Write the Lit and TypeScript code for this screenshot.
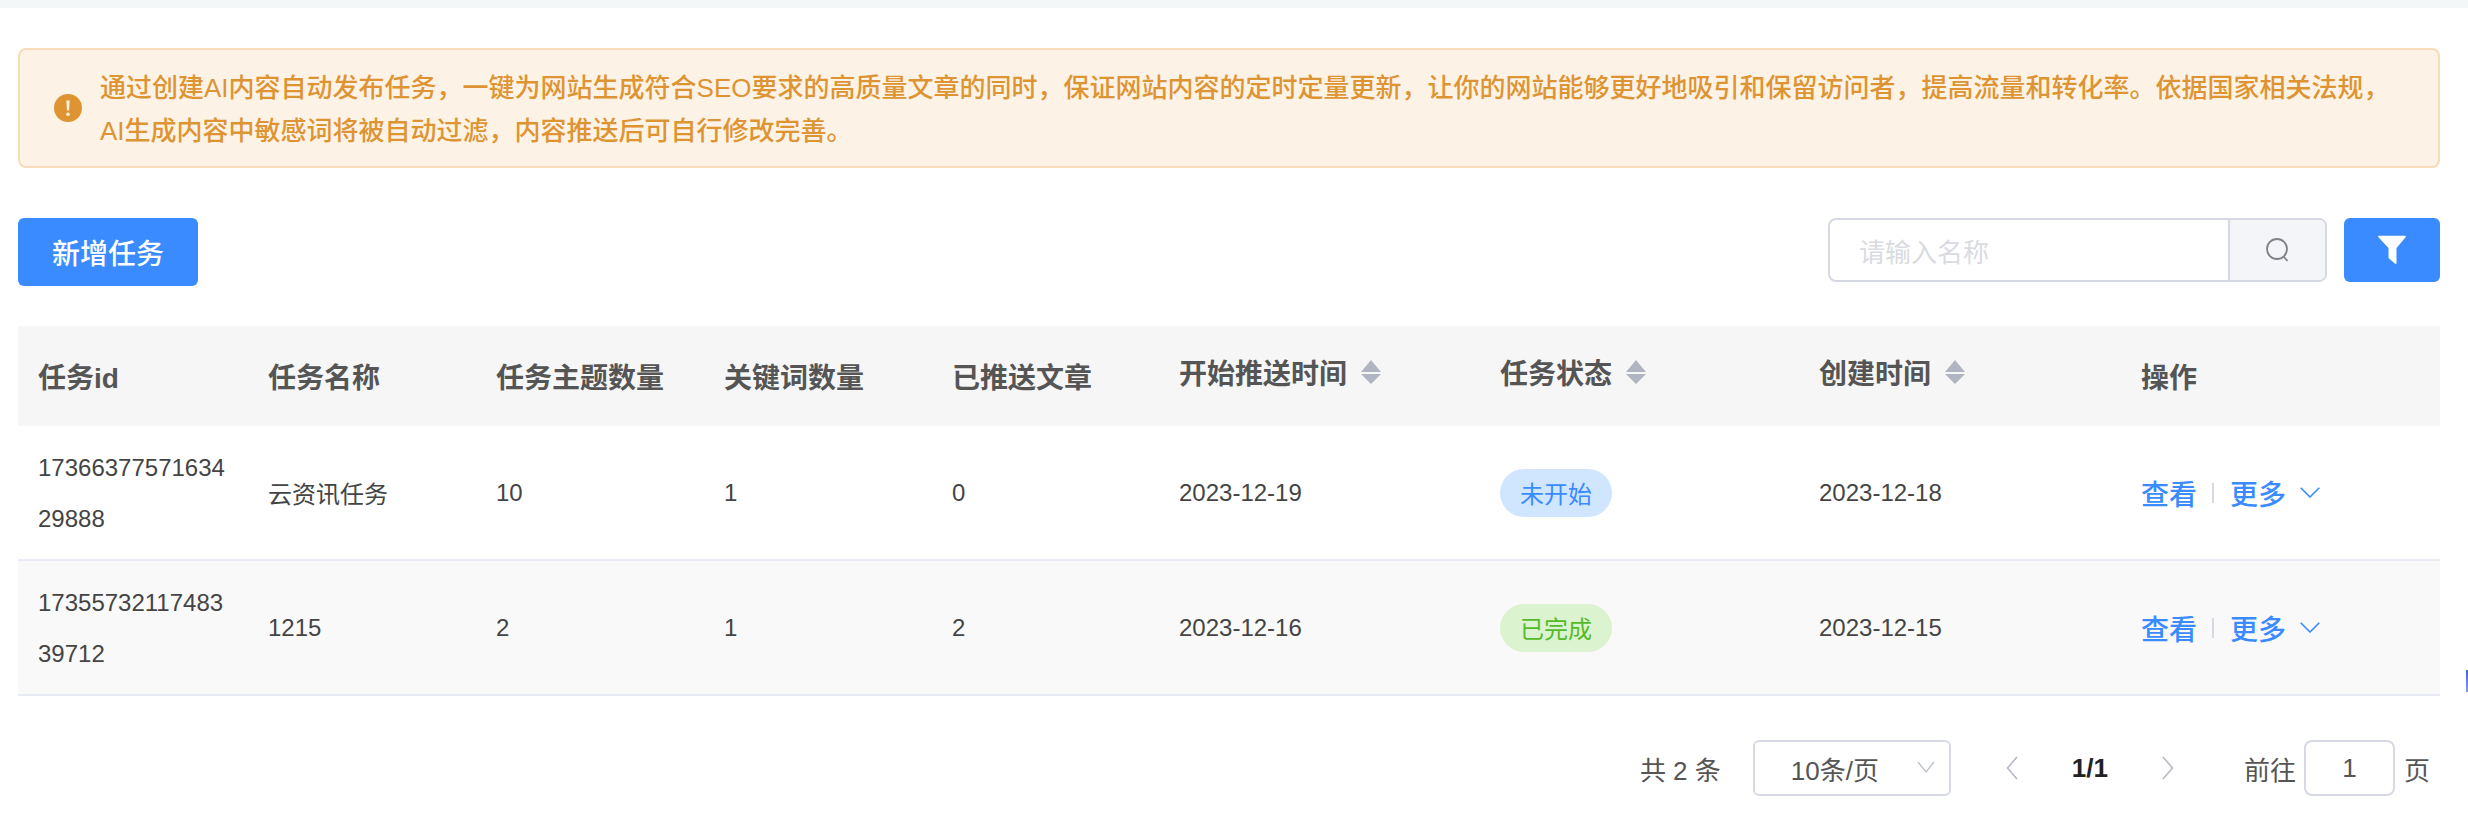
import { LitElement, html, css } from "lit";
import { customElement } from "lit/decorators.js";

const caret = html`<svg class="caret" viewBox="0 0 20 24" width="20" height="24"><path d="M10 0 L20 12 H0 Z M0 14 H20 L10 24 Z"/></svg>`;
const chevDown = html`<svg class="chev" viewBox="0 0 20 11" width="20" height="11"><path d="M0.7 0.7 L10 10 L19.3 0.7"/></svg>`;

const rows = [
  { id: "1736637757163429888", name: "云资讯任务", topics: "10", kw: "1", pushed: "0", start: "2023-12-19", status: "未开始", cls: "blue", created: "2023-12-18" },
  { id: "1735573211748339712", name: "1215", topics: "2", kw: "1", pushed: "2", start: "2023-12-16", status: "已完成", cls: "green", created: "2023-12-15" },
];

@customElement("app-root")
export class AppRoot extends LitElement {
  static styles = css`
    :host {
      display: block;
      background: #fff;
      color: #444;
      font-family: "Liberation Sans", "Noto Sans CJK SC", sans-serif;
      font-size: 24px;
      height: 834px;
      overflow: hidden;
      position: relative;
    }
    .strip { height: 8px; background: #f4f7f8; }
    .sliver {
      position: absolute;
      right: 0;
      top: 670px;
      width: 2px;
      height: 22px;
      background: linear-gradient(#3f66e0, #7f9cf0);
    }
    .page { padding: 40px 28px 0 18px; }
    .alert {
      display: flex;
      align-items: center;
      height: 120px;
      box-sizing: border-box;
      border: 2px solid #f6dcb9;
      border-radius: 8px;
      background: #fcf3e6;
      color: #de9432;
      font-size: 26px;
      font-weight: 500;
      line-height: 43px;
      padding: 0 40px 0 34px;
      gap: 18px;
    }
    .alert svg { flex: none; }
    .alert .msg { flex: 1; padding-top: 3px; }
    .toolbar {
      display: flex;
      align-items: flex-start;
      margin-top: 50px;
      height: 108px;
    }
    .add {
      width: 180px;
      height: 68px;
      display: flex;
      align-items: center;
      justify-content: center;
      background: #3a8bff;
      color: #fff;
      border-radius: 6px;
      font-size: 28px;
      font-weight: 500;
    }
    .spacer { flex: 1; }
    .search {
      width: 499px;
      height: 64px;
      box-sizing: border-box;
      border: 2px solid #d6d9e4;
      border-radius: 8px;
      display: flex;
      overflow: hidden;
    }
    .ph {
      flex: 1;
      display: flex;
      align-items: center;
      padding-left: 29px;
      font-size: 26px;
      color: #d9dbe0;
    }
    .sbtn {
      width: 97px;
      box-sizing: border-box;
      border-left: 2px solid #d6d9e4;
      background: #f4f5f9;
      display: flex;
      align-items: center;
      justify-content: center;
    }
    .filter {
      margin-left: 17px;
      width: 96px;
      height: 64px;
      background: #3a8bff;
      border-radius: 6px;
      display: flex;
      align-items: center;
      justify-content: center;
    }
    .grid {
      display: grid;
      grid-template-columns: 230px 228px 228px 228px 227px 321px 319px 322px 319px;
    }
    .cell {
      display: flex;
      align-items: center;
      padding: 0 12px 0 20px;
      box-sizing: border-box;
      min-width: 0;
    }
    .id { line-height: 51px; word-break: break-all; }
    .head, .row { display: contents; }
    .th {
      height: 100px;
      background: #f6f6f6;
      font-size: 28px;
      font-weight: 700;
      color: #555;
    }
    .th.sort { padding-bottom: 8px; gap: 14px; }
    .caret { flex: none; fill: #b1b5c1; }
    .td {
      height: 135px;
      border-bottom: 2px solid #e8ebf4;
    }
    .alt .td { background: #f9f9fa; }
    .tag {
      width: 112px;
      height: 48px;
      border-radius: 24px;
      display: flex;
      align-items: center;
      justify-content: center;
    }
    .tag.blue { background: #d0e6ff; color: #3a8bff; }
    .tag.green { background: #dcf3d0; color: #55bb2a; }
    .ops { color: #3a8bff; font-size: 28px; font-weight: 500; }
    .sep { width: 2px; height: 20px; background: #d6d9e2; margin: 0 16px 0 15px; }
    .chev { fill: none; stroke: #3a8bff; stroke-width: 1.6; margin-left: 14px; }
    .pager {
      display: flex;
      align-items: center;
      justify-content: flex-end;
      height: 56px;
      margin-top: 44px;
      padding-right: 10px;
      font-size: 26px;
      color: #555;
    }
    .total { margin-right: 32px; }
    .select {
      width: 198px;
      height: 56px;
      box-sizing: border-box;
      border: 2px solid #d6d9e4;
      border-radius: 6px;
      display: flex;
      align-items: center;
      padding: 0 14px 0 36px;
    }
    .select svg { margin-left: auto; margin-top: -2px; fill: none; stroke: #bfc3cd; stroke-width: 1.4; }
    .nav { fill: none; stroke: #b5b9c4; stroke-width: 1.6; flex: none; }
    .prev { margin-left: 55px; }
    .pos { font-weight: 700; color: #222; margin: 0 54px; }
    .goto { margin-left: 70px; }
    .num {
      width: 91px;
      height: 56px;
      box-sizing: border-box;
      border: 2px solid #d6d9e4;
      border-radius: 8px;
      display: flex;
      align-items: center;
      justify-content: center;
      margin: 0 9px 0 8px;
    }
  `;

  render() {
    return html`
      <div class="strip"></div>
      <div class="sliver"></div>
      <div class="page">
        <div class="alert">
          <svg width="28" height="28" viewBox="0 0 28 28">
            <circle cx="14" cy="14" r="14" fill="#de9432"/>
            <path d="M12.4 6.5h3.2l-.5 10h-2.2z" fill="#fcf3e6"/>
            <circle cx="14" cy="20.2" r="1.8" fill="#fcf3e6"/>
          </svg>
          <div class="msg">通过创建AI内容自动发布任务，一键为网站生成符合SEO要求的高质量文章的同时，保证网站内容的定时定量更新，让你的网站能够更好地吸引和保留访问者，提高流量和转化率。依据国家相关法规，AI生成内容中敏感词将被自动过滤，内容推送后可自行修改完善。</div>
        </div>
        <div class="toolbar">
          <div class="add">新增任务</div>
          <div class="spacer"></div>
          <div class="search">
            <div class="ph">请输入名称</div>
            <div class="sbtn">
              <svg width="26" height="26" viewBox="0 0 26 26" fill="none" stroke="#808287" stroke-width="1.8">
                <circle cx="12" cy="12" r="10"/><path d="M18.5 19.5l4 4.5"/>
              </svg>
            </div>
          </div>
          <div class="filter">
            <svg width="30" height="30" viewBox="0 0 30 30"><path d="M1 1.5a.8.8 0 0 1 .8-.8h26.4a.8.8 0 0 1 .6 1.3L19.5 13v15a1 1 0 0 1-1.7.6l-6.3-5.6V13L1.2 2z" fill="#fff"/></svg>
          </div>
        </div>
        <div class="grid">
          <div class="head">
            <div class="cell th">任务id</div>
            <div class="cell th">任务名称</div>
            <div class="cell th">任务主题数量</div>
            <div class="cell th">关键词数量</div>
            <div class="cell th">已推送文章</div>
            <div class="cell th sort">开始推送时间 ${caret}</div>
            <div class="cell th sort">任务状态 ${caret}</div>
            <div class="cell th sort">创建时间 ${caret}</div>
            <div class="cell th">操作</div>
          </div>
          ${rows.map((r, i) => html`
            <div class="row ${i === 1 ? "alt" : ""}">
              <div class="cell td id">${r.id}</div>
              <div class="cell td">${r.name}</div>
              <div class="cell td">${r.topics}</div>
              <div class="cell td">${r.kw}</div>
              <div class="cell td">${r.pushed}</div>
              <div class="cell td">${r.start}</div>
              <div class="cell td"><span class="tag ${r.cls}">${r.status}</span></div>
              <div class="cell td">${r.created}</div>
              <div class="cell td ops">查看<span class="sep"></span>更多${chevDown}</div>
            </div>
          `)}
        </div>
        <div class="pager">
          <span class="total">共 2 条</span>
          <div class="select">10条/页
            <svg width="18" height="12" viewBox="0 0 18 12"><path d="M1 1l8 10 8-10"/></svg>
          </div>
          <svg class="nav prev" width="12" height="24" viewBox="0 0 12 24"><path d="M11 1L1.5 12 11 23"/></svg>
          <span class="pos">1/1</span>
          <svg class="nav" width="12" height="24" viewBox="0 0 12 24"><path d="M1 1l9.5 11L1 23"/></svg>
          <span class="goto">前往</span>
          <div class="num">1</div>
          <span>页</span>
        </div>
      </div>
    `;
  }
}
